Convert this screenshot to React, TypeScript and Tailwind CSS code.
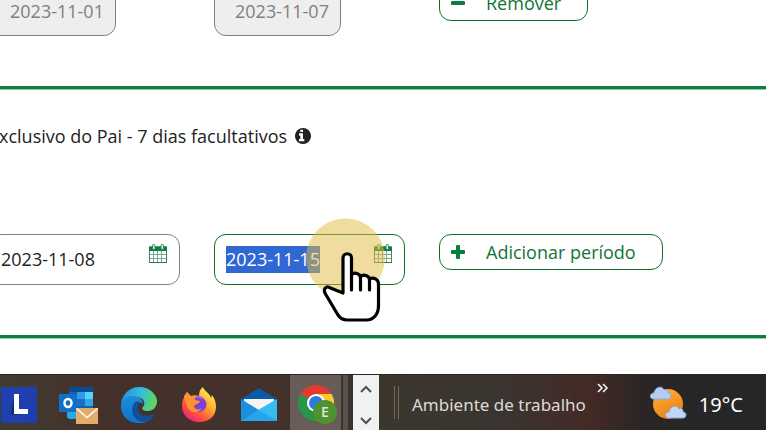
import React, { useEffect, useRef } from "react";

const InfoIcon = () => (
  <svg width="16" height="16" viewBox="128 128 1536 1536" fill="#222" aria-hidden="true">
    <path d="M1024 1376v-160q0-14-9-23t-23-9h-96v-512q0-14-9-23t-23-9h-320q-14 0-23 9t-9 23v160q0 14 9 23t23 9h96v320h-96q-14 0-23 9t-9 23v160q0 14 9 23t23 9h448q14 0 23-9t9-23zM896 480v-160q0-14-9-23t-23-9h-192q-14 0-23 9t-9 23v160q0 14 9 23t23 9h192q14 0 23-9t9-23zM1664 896q0 209-103 385.500t-279.500 279.500-385.500 103-385.500-103-279.500-279.500-103-385.500 103-385.500 279.500-279.500 385.500-103 385.500 103 279.500 279.500 103 385.500z" />
  </svg>
);

const CalendarIcon = () => (
  <svg width="18" height="20" viewBox="0 0 18 20" aria-hidden="true">
    <path d="M0.500 3h17v15.500h-17z" fill="#fff" stroke="#3f8a62" />
    <path d="M0 2.500h18V7H0z" fill="#0a8040" />
    <path d="M4.500 7v11M8.500 7v11M12.500 7v11M1 10.500h16M1 14.500h16" stroke="#7ca892" fill="none" />
    <path d="M0 18.500h18" stroke="#2c7a55" />
    <rect x="3.500" y="0.500" width="2.500" height="5" rx="1.200" fill="#e4efe4" stroke="#2f8350" />
    <rect x="12" y="0.500" width="2.500" height="5" rx="1.200" fill="#e4efe4" stroke="#2f8350" />
  </svg>
);

const DateField = ({
  label,
  value,
  active = false,
}: {
  label: string;
  value: string;
  active?: boolean;
}) => {
  const ref = useRef<HTMLInputElement>(null);

  useEffect(() => {
    if (active) {
      ref.current?.focus();
      ref.current?.select();
    }
  }, [active]);

  return (
    <div
      className={`flex h-[51px] w-[191px] shrink-0 items-center rounded-xl border bg-white pl-[11px] pr-3 ${
        active ? "border-[#0a7325]" : "border-[#808080]"
      }`}
    >
      <input
        ref={ref}
        type="text"
        aria-label={label}
        defaultValue={value}
        className="h-[27px] min-w-0 flex-1 bg-transparent text-lg leading-[27px] text-[#222] outline-none selection:bg-[#3067d3] selection:text-white"
      />
      <button type="button" aria-label="Abrir calendário" className="mb-3">
        <CalendarIcon />
      </button>
    </div>
  );
};

const DisabledField = ({ label, value }: { label: string; value: string }) => (
  <div className="w-[191px] shrink-0">
    <input
      type="text"
      disabled
      aria-label={label}
      defaultValue={value}
      className="h-[51px] w-[127px] rounded-xl border border-[#808080] bg-[#eee] pl-5 text-lg text-[#808080]"
    />
  </div>
);

const PeriodButton = ({ label, plus = false }: { label: string; plus?: boolean }) => (
  <button
    type="button"
    className="flex h-9 shrink-0 items-center gap-5 rounded-xl border border-[#0a7325] bg-white pl-[11px] pr-[26px] text-lg text-[#127436]"
  >
    <svg width="15" height="15" viewBox="0 0 15 15" fill="#08803c" aria-hidden="true">
      <rect x="0" y="5" width="14" height="4" rx="1" />
      {plus && <rect x="5" y="0" width="4" height="14" rx="1" />}
    </svg>
    {label}
  </button>
);

const Divider = () => <hr className="h-1 border-0 border-b border-[#a3bfae] bg-[#078238]" />;

const Pointer = () => (
  <svg
    className="pointer-events-none absolute left-[306px] top-[218px]"
    width="80"
    height="106"
    viewBox="306 218 80 106"
    aria-hidden="true"
  >
    <circle cx="345.500" cy="258" r="39.500" fill="#e2bb44" fillOpacity="0.515" />
    <path
      d="M343 293V258a4 4 0 0 1 8.500 0V275c2-3 8-2 9 2c2-3 8-2 9 2c4-2 9 0 9 5V306c0 8-5 14-12 14H347c-4 0-7-2-9-5L325.500 294c-3-5 1-9 5-6z"
      fill="#fff"
      stroke="#000"
      strokeWidth="3.200"
      strokeLinejoin="round"
    />
    <path d="M351.500 274V290M360.500 276V290M369.500 278V290" stroke="#000" strokeWidth="3.200" strokeLinecap="round" />
  </svg>
);

const WriterIcon = () => (
  <svg width="36" height="36" viewBox="0 0 36 36" aria-hidden="true">
    <path d="M0 0h36v36H0z" fill="#1f3fae" />
    <path d="M13 10l-3 16 2 2 13-1-10-4z" fill="#0b2f5c" />
    <path d="M13 7h5v15h9v5H13z" fill="#fff" />
  </svg>
);

const OutlookIcon = () => (
  <svg width="40" height="38" viewBox="0 0 40 38" aria-hidden="true">
    <path d="M10 1h24v28H10z" fill="#0f63b5" />
    <path d="M10 1h24v5H10z" fill="#0b4a94" />
    <path d="M18 6h8v7h-8z" fill="#2f9be4" />
    <path d="M26 6h8v7h-8z" fill="#56d4f7" />
    <path d="M18 13h8v7h-8z" fill="#1770c4" />
    <path d="M26 13h8v7h-8z" fill="#31a7e8" />
    <path d="M8 24h10v9h-8l-2-2z" fill="#2aa9e8" />
    <path d="M0 8h18v18H0z" fill="#0e70c9" />
    <ellipse cx="9" cy="17" rx="3.500" ry="4" fill="none" stroke="#fff" strokeWidth="2.500" />
    <path d="M17 22h22v16H17z" fill="#e3ad69" />
    <path d="M17.500 22.500l10.500 9 10.500-9" fill="none" stroke="#fff" strokeWidth="1.500" />
  </svg>
);

const EdgeIcon = () => (
  <svg width="36" height="36" viewBox="0 0 36 36" aria-hidden="true">
    <defs>
      <linearGradient id="edgeTop" x1="0" y1="0.400" x2="1" y2="0.600">
        <stop offset="0" stopColor="#2196dc" />
        <stop offset="0.500" stopColor="#33bddb" />
        <stop offset="1" stopColor="#62d851" />
      </linearGradient>
      <linearGradient id="edgeBody" x1="0" y1="0" x2="0" y2="1">
        <stop offset="0" stopColor="#1c8ddc" />
        <stop offset="1" stopColor="#0f72cc" />
      </linearGradient>
    </defs>
    <path d="M0 17C1 7 9 0 18 0c11 0 18 8 18 14 0 6-4 10-9 10-5 0-7-2-5-4 3-4 1-9-6-10C9 9 2 11 0 17z" fill="url(#edgeTop)" />
    <path d="M0 18c1-6 6-9 12-9 6 0 10 4 10 8-3-3-8 0-8 6 0 6 5 12 12 12C11 40-1 30 0 18z" fill="url(#edgeBody)" />
    <path d="M13 16c-5 9 1 19 11 19 4 0 8-4 10-8-9 4-18 1-17-7 0-2 1-3 3-4-2-2-5-2-7 0z" fill="#124f96" />
  </svg>
);

const FirefoxIcon = () => (
  <svg width="34" height="36" viewBox="0 0 34 36" aria-hidden="true">
    <defs>
      <linearGradient id="fox" x1="0.800" y1="0.100" x2="0.200" y2="0.900">
        <stop offset="0" stopColor="#ffe94d" />
        <stop offset="0.350" stopColor="#ffb02e" />
        <stop offset="0.700" stopColor="#ff5a3a" />
        <stop offset="1" stopColor="#f0286b" />
      </linearGradient>
    </defs>
    <path d="M21 0c1 4 7 6 8 11l1-3c3 4 4 8 4 12 0 9-7 15-17 15S0 28 0 19c0-5 1-8 4-11l1-3 4 4c3-1 6-1 8 0 0-4 1-7 4-9z" fill="url(#fox)" />
    <circle cx="17" cy="17.500" r="7.500" fill="#7c40d6" />
    <path d="M12 10c4-2 9-1 11 3-3-2-7-1-11-3z" fill="#a85be8" />
    <path d="M2 9l3-4 3 4c3 0 5 2 5 4l5 1c-1 3-4 3-6 5 0 3 4 5 8 2-2 5-11 6-14 0C4 17 3 12 2 9z" fill="#ff9230" />
  </svg>
);

const MailIcon = () => (
  <svg width="36" height="34" viewBox="0 0 36 34" aria-hidden="true">
    <path d="M0 11L18 0l18 11v10H0z" fill="#0a5aa8" />
    <path d="M3 11h30v3L18 26 3 14z" fill="#f4f4f4" />
    <path d="M0 11l36 22H0z" fill="#1b8fdf" />
    <path d="M36 11v22L17 22z" fill="#35bdf2" />
    <path d="M0 33l17-11 19 11z" fill="#27a4ea" />
  </svg>
);

const ChromeIcon = () => (
  <svg width="40" height="40" viewBox="0 0 40 40" aria-hidden="true">
    <path d="M18 18L2.400 9A18 18 0 0 1 33.600 9z" fill="#e33b2e" />
    <path d="M18 18L2.400 9A18 18 0 0 0 18 36l8-14z" fill="#27964a" />
    <path d="M18 18V9h15.600A18 18 0 0 1 18 36l8-14z" fill="#fcc934" />
    <circle cx="18" cy="18" r="9" fill="#fff" />
    <circle cx="18" cy="18" r="7" fill="#2f79e4" />
    <circle cx="27" cy="27" r="12" fill="#4f9330" />
    <text x="27" y="32" textAnchor="middle" fontSize="14" fontFamily="Open Sans, sans-serif" fontWeight="600" fill="#dfe9d8">
      E
    </text>
  </svg>
);

const WeatherIcon = () => (
  <svg width="37" height="34" viewBox="0 0 37 34" aria-hidden="true">
    <defs>
      <linearGradient id="sun" x1="0.200" y1="0" x2="0.700" y2="1">
        <stop offset="0" stopColor="#f9b233" />
        <stop offset="1" stopColor="#ee7c13" />
      </linearGradient>
    </defs>
    <circle cx="18" cy="18" r="15" fill="url(#sun)" />
    <path d="M3 13c-4-1-3-6 1-6C5 1 12-1 14 4c3-1 4 0 4 3 4 0 4 6 0 6z" fill="#b5cdf2" stroke="#89aae0" />
    <path d="M18 32c-4-1-3-6 1-6 1-6 8-8 10-3 3-1 4 0 4 3 4 0 4 6 0 6z" fill="#c3d5f5" stroke="#89aae0" />
  </svg>
);

const apps = [
  { name: "LibreOffice", icon: <WriterIcon /> },
  { name: "Outlook", icon: <OutlookIcon /> },
  { name: "Edge", icon: <EdgeIcon /> },
  { name: "Firefox", icon: <FirefoxIcon /> },
  { name: "Correio", icon: <MailIcon /> },
];

const Taskbar = () => (
  <footer className="flex h-14 items-stretch overflow-hidden border-t border-[#2c2623] bg-[linear-gradient(90deg,#403c30_0px,#44312b_100px,#43312c_290px,#3b322e_352px,#3c372d_380px,#3a3430_500px,#442a25_590px,#2b2625_640px,#262626_700px)] font-['Noto_Sans','Open_Sans',sans-serif]">
    <div className="-ml-[11px] flex shrink-0">
      {apps.map((app) => (
        <button key={app.name} type="button" aria-label={app.name} className="flex w-[60px] items-center justify-center pt-1">
          {app.icon}
        </button>
      ))}
    </div>
    <button type="button" aria-label="Chrome" className="ml-px flex w-[51px] shrink-0 items-center justify-center bg-[#675c58] pl-1 pt-1">
      <ChromeIcon />
    </button>
    <div className="mx-[2px] w-[5px] shrink-0 bg-[#57504d]" />
    <div className="ml-[3px] flex w-[26px] shrink-0 flex-col items-center justify-between bg-[#f1f1f1] pb-1 pt-[9px]">
      <button type="button" aria-label="Subir">
        <svg width="12" height="9" viewBox="0 0 12 9" fill="none" stroke="#505050" strokeWidth="2" aria-hidden="true">
          <path d="M1 8l5-5 5 5" />
        </svg>
      </button>
      <button type="button" aria-label="Descer">
        <svg width="12" height="9" viewBox="0 0 12 9" fill="none" stroke="#505050" strokeWidth="2" aria-hidden="true">
          <path d="M1 1l5 5 5-5" />
        </svg>
      </button>
    </div>
    <div className="my-[11px] ml-[15px] w-[5px] shrink-0 border-x border-[#6d675f]" />
    <span className="ml-[13px] shrink-0 self-center pt-1 text-[17px] text-[#dcdad8]">Ambiente de trabalho</span>
    <button type="button" aria-label="Mais itens" className="ml-[11px] mt-2 shrink-0 self-start">
      <svg width="12" height="10" viewBox="0 0 12 10" fill="none" stroke="#fff" strokeWidth="1.500" aria-hidden="true">
        <path d="M1 1l4 4-4 4M6 1l4 4-4 4" />
      </svg>
    </button>
    <div className="ml-[41px] flex shrink-0 items-center gap-3 text-xl text-white">
      <WeatherIcon />
      <span className="pt-1">19°C</span>
    </div>
  </footer>
);

export default function App() {
  return (
    <div className="relative min-h-screen overflow-hidden bg-white font-['Open_Sans','Noto_Sans',sans-serif]">
      <main className="flex flex-col">
        <section className="-ml-[11px] -mt-[15px] flex items-start gap-[34px] pb-[50px]">
          <DisabledField label="Data de início" value="2023-11-01" />
          <DisabledField label="Data de fim" value="2023-11-07" />
          <PeriodButton label="Remover" />
        </section>
        <Divider />
        <section className="pb-[50px] pt-[31px]">
          <h2 className="-ml-[11px] flex items-center gap-2 whitespace-nowrap text-lg leading-[30px] text-[#222]">
            Exclusivo do Pai - 7 dias facultativos
            <InfoIcon />
          </h2>
          <div className="-ml-[11px] mt-[83px] flex items-start gap-[34px]">
            <DateField label="Data de início" value="2023-11-08" />
            <DateField label="Data de fim" value="2023-11-15" active />
            <PeriodButton label="Adicionar período" plus />
          </div>
        </section>
        <Divider />
      </main>
      <div className="h-[35px]" />
      <Taskbar />
      <Pointer />
    </div>
  );
}
